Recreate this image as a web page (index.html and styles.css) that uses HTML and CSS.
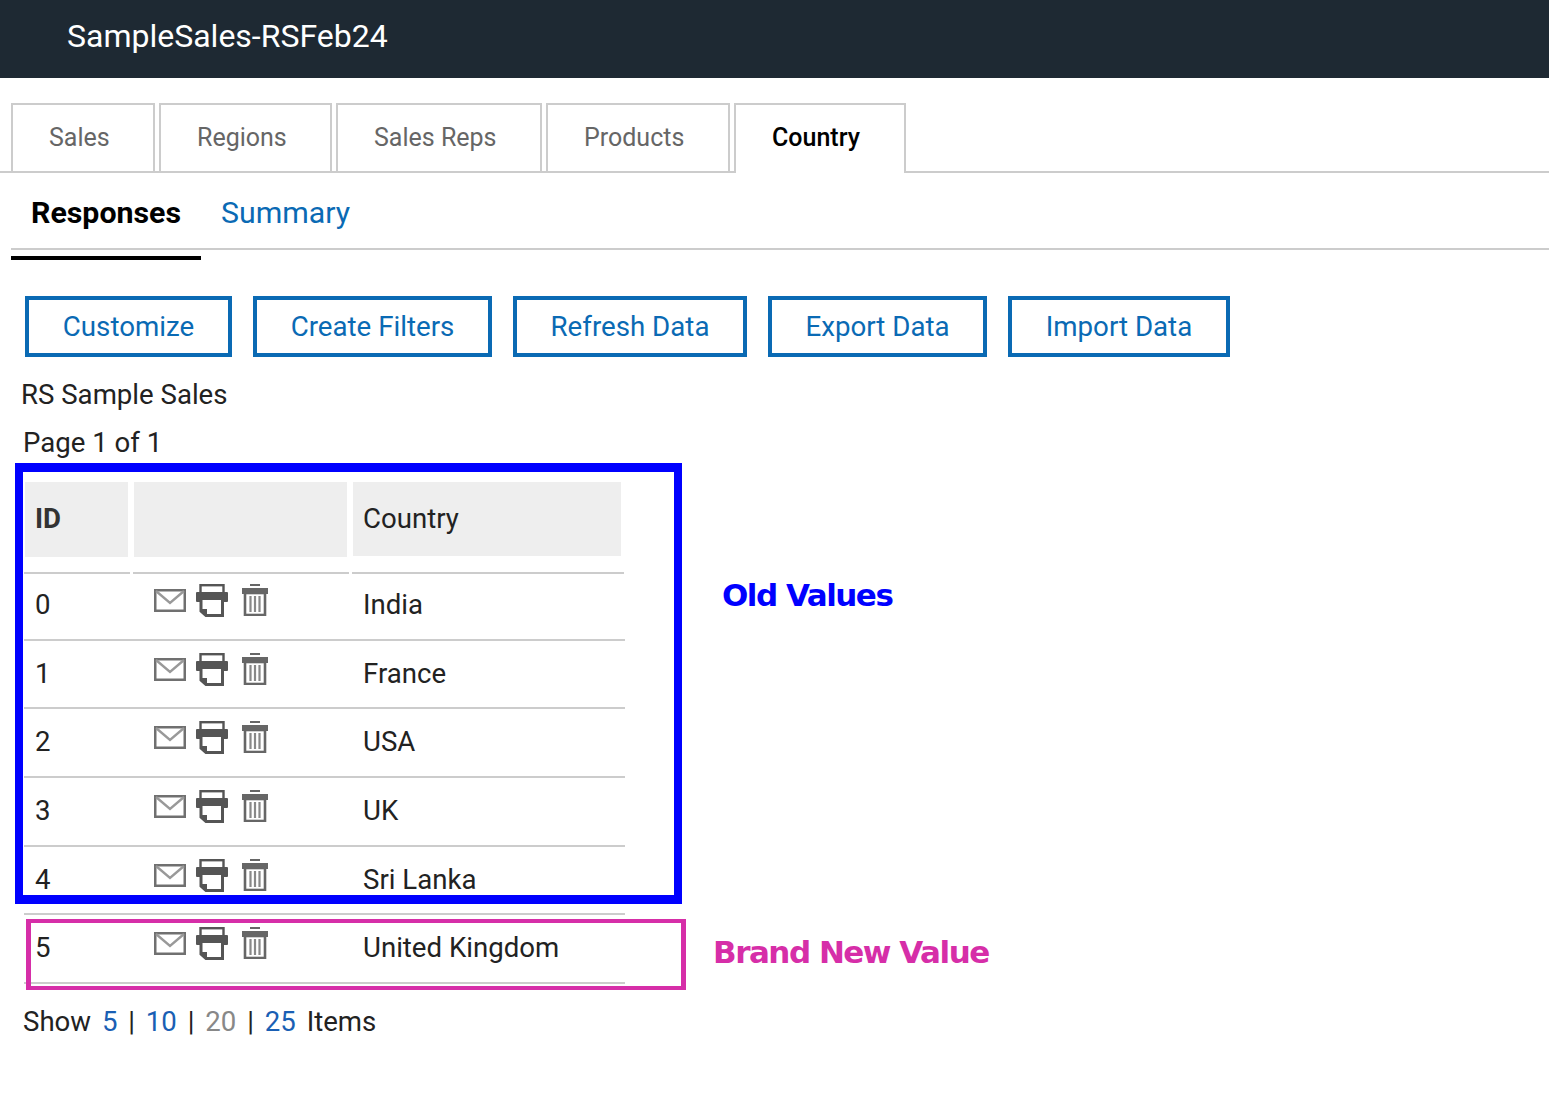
FILE: index.html
```html
<!DOCTYPE html>
<html lang="en">
<head>
  <meta charset="UTF-8" />
  <title>SampleSales-RSFeb24</title>
  <link rel="stylesheet" href="styles.css">
</head>
<body>
  <svg class="defs" width="0" height="0">
    <symbol id="icoMail" viewBox="0 0 32 23">
      <rect x="1.2" y="1.2" width="29.6" height="20.6" fill="#fff" stroke="#707070" stroke-width="2.6" />
      <path d="M2 2 L16 14 L30 2" fill="none" stroke="#999" stroke-width="2.4" />
    </symbol>
    <symbol id="icoPrint" viewBox="0 0 32 33">
      <rect x="4.5" y="1.2" width="23" height="9" fill="#fff" stroke="#555" stroke-width="2.4" />
      <rect x="0" y="8" width="32" height="10" rx="1" fill="#555" />
      <path d="M5 16 V27 L10 31.5 H26.5 V16" fill="#fff" stroke="#555" stroke-width="3" />
      <path d="M4 25 H11 V32 Z" fill="#555" />
    </symbol>
    <symbol id="icoTrash" viewBox="0 0 26 32">
      <rect x="8" y="0" width="10" height="2" fill="#666" />
      <rect x="0" y="4" width="26" height="6" fill="#666" />
      <rect x="3" y="9" width="20" height="22" fill="#fff" stroke="#666" stroke-width="2.6" />
      <path d="M8.5 12 V28 M13 12 V28 M17.5 12 V28" stroke="#888" stroke-width="2.2" />
    </symbol>
  </svg>

  <header class="topbar">SampleSales-RSFeb24</header>

  <nav class="tabs">
    <a class="tab">Sales</a>
    <a class="tab">Regions</a>
    <a class="tab">Sales Reps</a>
    <a class="tab">Products</a>
    <a class="tab active">Country</a>
  </nav>

  <div class="subtabs">
    <a class="subtab active">Responses</a>
    <a class="subtab">Summary</a>
  </div>
  <div class="subtab-mark"></div>

  <div class="actions">
    <button class="btn b1">Customize</button>
    <button class="btn b2">Create Filters</button>
    <button class="btn b3">Refresh Data</button>
    <button class="btn b4">Export Data</button>
    <button class="btn b5">Import Data</button>
  </div>

  <p class="form-name">RS Sample Sales</p>
  <p class="page-info">Page 1 of 1</p>

  <div class="grid">
    <div class="head">
      <div class="hcell c-id"><b>ID</b></div>
      <div class="hcell c-icons"></div>
      <div class="hcell c-name short">Country</div>
    </div>
    <div class="head-rule"><span></span><span></span><span></span></div>

    <div class="row first">
      <div class="cid">0</div>
      <div class="cicons"><svg class="i-mail"><use href="#icoMail" /></svg><svg class="i-print"><use href="#icoPrint" /></svg><svg class="i-trash"><use href="#icoTrash" /></svg></div>
      <div class="cname">India</div>
    </div>
    <div class="row">
      <div class="cid">1</div>
      <div class="cicons"><svg class="i-mail"><use href="#icoMail" /></svg><svg class="i-print"><use href="#icoPrint" /></svg><svg class="i-trash"><use href="#icoTrash" /></svg></div>
      <div class="cname">France</div>
    </div>
    <div class="row">
      <div class="cid">2</div>
      <div class="cicons"><svg class="i-mail"><use href="#icoMail" /></svg><svg class="i-print"><use href="#icoPrint" /></svg><svg class="i-trash"><use href="#icoTrash" /></svg></div>
      <div class="cname">USA</div>
    </div>
    <div class="row">
      <div class="cid">3</div>
      <div class="cicons"><svg class="i-mail"><use href="#icoMail" /></svg><svg class="i-print"><use href="#icoPrint" /></svg><svg class="i-trash"><use href="#icoTrash" /></svg></div>
      <div class="cname">UK</div>
    </div>
    <div class="row">
      <div class="cid">4</div>
      <div class="cicons"><svg class="i-mail"><use href="#icoMail" /></svg><svg class="i-print"><use href="#icoPrint" /></svg><svg class="i-trash"><use href="#icoTrash" /></svg></div>
      <div class="cname">Sri Lanka</div>
    </div>
    <div class="row">
      <div class="cid">5</div>
      <div class="cicons"><svg class="i-mail"><use href="#icoMail" /></svg><svg class="i-print"><use href="#icoPrint" /></svg><svg class="i-trash"><use href="#icoTrash" /></svg></div>
      <div class="cname">United Kingdom</div>
    </div>
  </div>

  <div class="pager">
    Show <a class="num">5</a> | <a class="num">10</a> | <a class="num off">20</a> | <a class="num">25</a> Items
  </div>

  <!-- annotations drawn over the screenshot -->
  <div class="mark mark-old"></div>
  <div class="mark mark-new"></div>
  <div class="note note-old">Old Values</div>
  <div class="note note-new">Brand New Value</div>
</body>
</html>
```

FILE: styles.css
```css
* {
  box-sizing: border-box;
  margin: 0;
  padding: 0;
}

html, body {
  height: 100%;
  background: #fff;
  font-family: Roboto, 'Liberation Sans', sans-serif;
  font-size: 27.6px;
  color: #222;
}

body {
  position: relative;
  overflow: hidden;
}

.defs {
  position: absolute;
}

.topbar {
  height: 78px;
  background: #1e2933;
  color: #fff;
  font-size: 32px;
  line-height: 72px;
  padding-left: 67px;
}

.tabs {
  display: flex;
  gap: 4px;
  height: 95px;
  padding: 25px 0 0 11px;
  border-bottom: 2px solid #ccc;
}

.tab {
  height: 70px;
  padding-left: 36px;
  border: 2px solid #ccc;
  border-bottom: none;
  font-size: 25px;
  line-height: 66px;
  color: #666;
}

.tab:nth-child(1) { width: 144px; }
.tab:nth-child(2) { width: 173px; }
.tab:nth-child(3) { width: 206px; }
.tab:nth-child(4) { width: 184px; }

.tab.active {
  width: 172px;
  color: #000;
  font-weight: 500;
  background: #fff;
}

.subtabs {
  display: flex;
  gap: 40px;
  height: 77px;
  margin-left: 11px;
  padding-left: 20px;
  border-bottom: 2px solid #ccc;
  font-size: 30.3px;
  line-height: 79px;
}

.subtab {
  color: #0a6ab4;
}

.subtab.active {
  color: #000;
  font-weight: 700;
}

.subtab-mark {
  width: 190px;
  height: 4px;
  margin: 6px 0 0 11px;
  background: #000;
}

.actions {
  display: flex;
  gap: 21px;
  margin: 36px 0 0 25px;
}

.btn {
  height: 61px;
  border: 4px solid #0a6ab4;
  background: #fff;
  color: #0a6ab4;
  font-family: inherit;
  font-size: 27.7px;
}

.b1 { width: 207px; }
.b2 { width: 239px; }
.b3 { width: 234px; }
.b4 { width: 219px; }
.b5 { width: 222px; }

.form-name {
  margin: 22px 0 0 21px;
  line-height: 32px;
}

.page-info {
  margin: 16px 0 0 23px;
  line-height: 32px;
}

.grid {
  width: 601px;
  margin: 23px 0 0 24px;
}

.head {
  display: flex;
  gap: 6px;
  margin-left: 1px;
}

.hcell {
  height: 75px;
  padding-left: 10px;
  background: #eee;
  line-height: 74px;
}

.c-id { width: 103px; }
.c-id b { font-weight: 700; color: #333; }
.c-icons { width: 213px; }
.c-name { width: 268px; }
.c-name.short { height: 74px; }

.head-rule {
  display: flex;
  gap: 3px;
  margin-top: 15px;
}

.head-rule span {
  height: 2px;
  background: #ccc;
}

.head-rule span:nth-child(1) { width: 106px; }
.head-rule span:nth-child(2) { width: 216px; }
.head-rule span:nth-child(3) { width: 272px; }

.row {
  display: flex;
  height: 68.7px;
  padding-top: 12px;
  border-bottom: 2px solid #ccc;
}

.row.first {
  height: 66.7px;
  padding-top: 10px;
}

.cid {
  width: 130px;
  padding: 5px 0 0 11px;
  line-height: 32px;
}

.cicons {
  display: flex;
  gap: 10px;
  width: 209px;
  height: 33px;
}

.cicons svg {
  display: block;
}

.i-mail { width: 32px; height: 23px; margin-top: 5px; }
.i-print { width: 32px; height: 33px; }
.i-trash { width: 26px; height: 32px; margin-left: 4px; }

.cname {
  padding-top: 5px;
  line-height: 32px;
}

.pager {
  margin: 21.6px 0 0 23px;
  line-height: 32px;
  word-spacing: 4px;
}

.num { color: #1a5fb4; }
.num.off { color: #888; }

.mark {
  position: absolute;
}

.mark-old {
  left: 15px;
  top: 463px;
  width: 667px;
  height: 441px;
  border: 8px solid #0000ff;
  border-width: 9px 8px;
}

.mark-new {
  left: 26px;
  top: 919px;
  width: 660px;
  height: 71px;
  border: 5px solid #d62ea8;
  border-width: 4px 5px;
}

.note {
  position: absolute;
  font-family: 'DejaVu Sans', sans-serif;
  font-size: 31px;
  font-weight: 700;
  letter-spacing: -1.5px;
  line-height: 40px;
  white-space: nowrap;
}

.note-old {
  left: 722px;
  top: 575px;
  color: #0000ff;
}

.note-new {
  left: 713px;
  top: 932px;
  color: #d62ea8;
}
```
